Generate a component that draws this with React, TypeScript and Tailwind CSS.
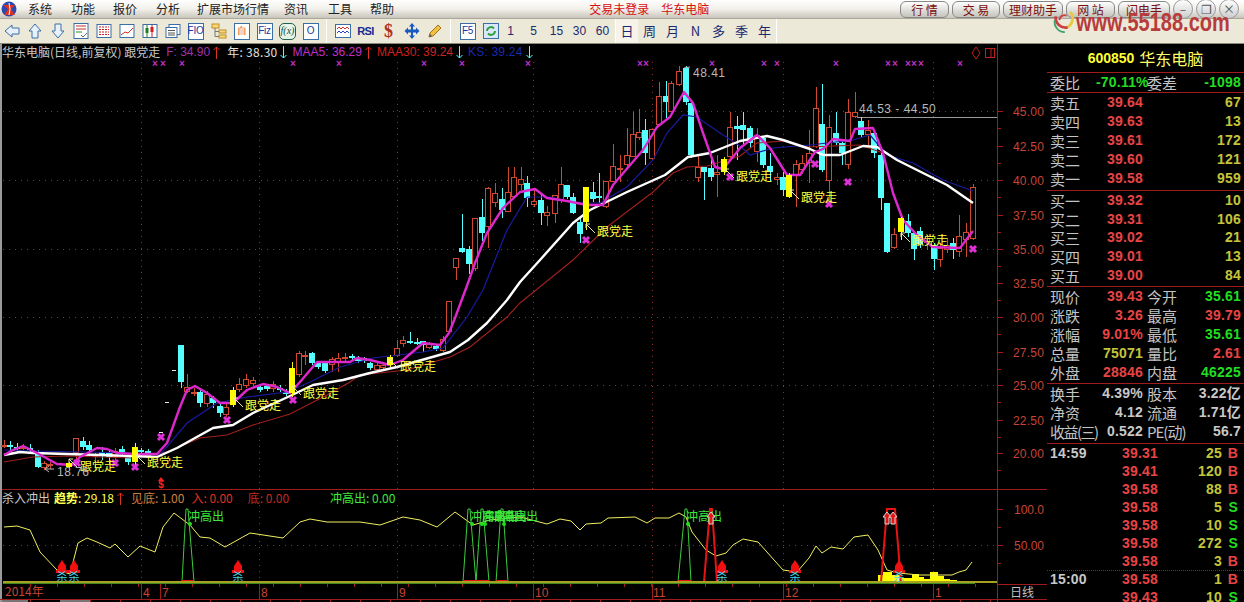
import type { ReactNode } from "react"

const font = "font-['Liberation_Sans','Noto_Sans_CJK_SC',sans-serif]"
const cjk = "font-['Noto_Sans_CJK_SC','Liberation_Sans',sans-serif]"

type Kind = "r" | "c" | "y"
// x, body top, body bottom, high, low (all screen px)
const candles: [number, number, number, number, number, Kind][] = [
  [4, 445, 446, 440, 448, "r"], [10, 445, 446, 441, 451, "c"], [17, 447, 448, 443, 452, "c"], [23, 447, 448, 444, 450, "r"],
  [30, 448, 449, 444, 452, "c"], [38, 453, 467, 450, 468, "c"], [44, 463, 468, 461, 470, "r"], [50, 464, 465, 462, 469, "r"],
  [69, 463, 467, 462, 468, "y"], [76, 438, 453, 438, 463, "r"], [83, 441, 447, 437, 450, "c"], [89, 445, 450, 441, 453, "c"],
  [95, 455, 456, 453, 470, "r"], [102, 452, 455, 447, 460, "c"], [109, 453, 457, 451, 464, "c"], [115, 451, 457, 448, 466, "r"],
  [122, 449, 454, 446, 456, "c"], [128, 457, 462, 455, 465, "c"], [135, 447, 462, 443, 465, "y"], [141, 450, 451, 448, 456, "c"],
  [148, 451, 456, 449, 458, "c"], [181, 345, 382, 345, 388, "c"], [187, 387, 392, 374, 393, "r"], [194, 392, 393, 388, 396, "r"],
  [200, 392, 403, 390, 407, "c"], [207, 394, 404, 391, 407, "r"], [213, 398, 403, 396, 408, "c"], [220, 406, 413, 403, 417, "c"],
  [226, 407, 415, 403, 417, "r"], [233, 390, 405, 387, 407, "y"], [239, 384, 390, 378, 392, "r"], [246, 379, 386, 374, 388, "r"],
  [253, 380, 384, 377, 387, "r"], [260, 387, 390, 384, 392, "c"], [267, 386, 389, 384, 391, "c"], [273, 384, 389, 381, 392, "r"],
  [280, 388, 390, 385, 392, "c"], [286, 392, 394, 389, 396, "c"], [292, 368, 393, 362, 397, "y"], [299, 353, 375, 351, 377, "r"],
  [305, 355, 356, 351, 365, "r"], [312, 353, 363, 352, 365, "c"], [318, 363, 367, 362, 369, "c"], [325, 363, 371, 361, 373, "c"],
  [332, 359, 365, 357, 372, "r"], [338, 358, 362, 353, 372, "r"], [345, 357, 358, 353, 362, "r"], [352, 356, 357, 354, 360, "c"],
  [358, 358, 361, 356, 363, "c"], [364, 358, 361, 357, 363, "c"], [370, 363, 368, 362, 370, "c"], [377, 365, 370, 363, 372, "r"],
  [383, 365, 368, 364, 370, "r"], [390, 357, 365, 355, 367, "y"], [397, 348, 356, 340, 357, "r"], [403, 340, 344, 336, 347, "r"],
  [410, 341, 342, 332, 344, "c"], [417, 342, 343, 338, 345, "c"], [423, 341, 345, 341, 352, "c"], [429, 344, 348, 342, 349, "r"],
  [436, 346, 349, 344, 351, "c"], [443, 339, 351, 336, 352, "r"], [449, 301, 332, 301, 333, "r"], [456, 258, 268, 258, 280, "r"],
  [462, 248, 252, 214, 253, "c"], [469, 249, 264, 246, 274, "c"], [475, 218, 269, 218, 271, "r"], [482, 217, 233, 199, 241, "c"],
  [488, 188, 227, 187, 248, "r"], [495, 193, 203, 183, 207, "r"], [502, 199, 210, 188, 218, "c"], [508, 192, 212, 167, 212, "r"],
  [514, 177, 197, 167, 197, "r"], [521, 179, 185, 167, 190, "r"], [527, 183, 198, 176, 207, "c"], [534, 201, 205, 190, 207, "r"],
  [541, 200, 213, 195, 225, "c"], [547, 212, 216, 206, 226, "r"], [555, 195, 214, 195, 223, "r"], [561, 184, 200, 167, 203, "r"],
  [567, 185, 197, 185, 199, "c"], [573, 197, 213, 193, 214, "c"], [580, 222, 234, 217, 243, "c"], [586, 187, 222, 187, 230, "y"],
  [593, 192, 199, 182, 202, "c"], [599, 196, 197, 173, 203, "c"], [606, 181, 207, 181, 208, "r"], [613, 166, 182, 144, 182, "r"],
  [620, 168, 170, 155, 182, "r"], [627, 155, 165, 128, 169, "r"], [633, 134, 157, 112, 157, "r"], [639, 132, 138, 109, 140, "r"],
  [645, 130, 153, 119, 165, "c"], [652, 129, 159, 129, 160, "r"], [659, 96, 125, 82, 125, "r"], [666, 96, 102, 81, 118, "c"],
  [671, 83, 112, 81, 112, "r"], [679, 71, 85, 66, 86, "r"], [686, 68, 102, 66, 105, "c"], [691, 103, 155, 103, 158, "c"],
  [698, 167, 178, 155, 182, "r"], [704, 167, 172, 167, 200, "c"], [711, 168, 177, 160, 181, "c"], [717, 172, 175, 155, 197, "r"],
  [724, 159, 172, 157, 175, "y"], [730, 127, 157, 112, 158, "r"], [737, 126, 129, 116, 160, "c"], [743, 125, 130, 112, 145, "c"],
  [750, 128, 143, 126, 148, "c"], [757, 135, 152, 128, 162, "r"], [763, 138, 165, 136, 168, "c"], [770, 166, 172, 153, 182, "c"],
  [777, 177, 180, 173, 185, "r"], [783, 177, 190, 172, 196, "c"], [789, 175, 197, 173, 198, "y"], [796, 164, 175, 160, 207, "r"],
  [802, 163, 170, 155, 174, "r"], [809, 153, 163, 130, 183, "r"], [816, 108, 147, 87, 148, "r"], [822, 124, 170, 84, 172, "c"],
  [829, 127, 181, 115, 200, "r"], [836, 133, 143, 112, 145, "c"], [842, 143, 153, 141, 165, "c"], [848, 112, 165, 99, 169, "r"],
  [855, 112, 117, 92, 118, "r"], [861, 121, 135, 117, 137, "c"], [868, 130, 135, 120, 145, "r"], [874, 133, 153, 131, 158, "c"],
  [881, 155, 198, 153, 210, "c"], [887, 203, 252, 203, 253, "c"], [894, 234, 248, 228, 249, "r"], [901, 218, 232, 217, 240, "y"],
  [908, 221, 233, 214, 237, "c"], [914, 233, 249, 231, 260, "c"], [920, 231, 244, 227, 248, "c"], [927, 238, 243, 235, 250, "r"],
  [934, 245, 259, 243, 270, "c"], [940, 248, 260, 243, 267, "r"], [947, 245, 250, 238, 253, "r"], [953, 243, 250, 238, 259, "c"],
  [959, 236, 252, 215, 257, "r"], [966, 232, 240, 223, 257, "r"], [973, 187, 239, 184, 240, "r"],
]

const pink = "4,455 13,450 23,446 37,453 57,464 72,465 80,457 97,448 107,449 117,453 133,454 157,454 167,443 180,407 187,390 195,386 207,393 220,403 233,403 247,390 263,384 277,387 290,393 300,382 317,362 350,362 357,358 370,360 390,365 403,360 423,343 440,345 449,333 455,318 468,283 475,263 487,233 503,208 520,192 535,189 547,198 567,201 587,205 603,205 613,185 643,150 657,127 670,117 684,92 693,103 703,133 715,167 723,169 737,152 740,148 757,135 770,148 787,175 800,175 815,152 823,149 833,139 850,141 855,129 873,128 883,153 893,193 903,220 917,235 933,247 960,248 973,231"
const white = "4,455 20,452 33,453 67,454 133,456 157,457 177,448 213,428 233,425 253,413 290,396 313,385 343,380 370,373 397,367 450,352 468,340 487,323 507,300 520,282 540,260 573,223 590,210 627,192 665,175 688,157 710,153 740,141 767,136 783,140 810,149 823,155 840,155 863,146 877,147 897,160 923,173 947,185 973,203"
const red = "4,462 33,457 67,456 133,458 167,452 200,438 227,435 253,425 290,414 327,395 350,382 360,375 407,370 450,357 470,347 507,317 520,303 573,260 607,227 653,192 673,173 687,167 707,166 740,156 757,143 783,141 807,147 860,145 883,153"
const blue = "4,450 33,451 133,453 160,455 187,423 217,403 247,397 287,392 310,382 340,367 373,358 423,352 443,348 467,317 483,290 503,240 507,230 527,197 550,197 577,203 600,203 627,187 653,160 667,133 683,115 697,117 720,133 740,146 750,155 773,148 810,145 853,140 870,135 887,155 913,163 943,180 973,191"
const trend = "4,527 17,526 30,530 40,552 57,570 70,574 78,543 87,538 97,542 110,548 115,544 128,557 140,546 155,552 163,527 174,513 190,525 200,537 210,538 225,547 250,533 283,538 300,522 310,519 327,522 360,522 380,525 403,517 420,520 437,527 455,512 473,525 490,520 520,517 547,524 560,519 571,521 580,530 586,524 601,523 608,518 635,517 647,523 655,518 669,518 679,513 686,517 692,532 706,550 716,556 726,553 733,545 743,539 758,542 783,570 797,572 809,558 816,546 822,553 831,547 843,549 854,537 868,535 878,550 887,570 898,573 919,575 952,575 959,572 966,570 972,562"

const months = [141, 259, 397, 533, 652, 783, 933]
const topMarks = [155, 163, 182, 293, 339, 424, 462, 528, 640, 646, 712, 764, 777, 836, 888, 895, 908, 914, 921, 960]
const sellMarks: [number, number][] = [[77, 463], [115, 463], [135, 467], [161, 437], [227, 420], [293, 400], [586, 240], [730, 177], [815, 164], [848, 182], [829, 204], [973, 249]]
const priceLabels: [string, number][] = [["45.00", 111], ["42.50", 146], ["40.00", 180], ["37.50", 215], ["35.00", 249], ["32.50", 283], ["30.00", 317], ["27.50", 352], ["25.00", 385], ["22.50", 420], ["20.00", 453]]
const follow: [number, number][] = [[80, 466], [147, 462], [245, 405], [303, 393], [400, 366], [597, 231], [736, 176], [801, 197], [912, 240]]

function Candle({ c }: { c: (typeof candles)[number] }) {
  const [x, top, bot, hi, lo, kind] = c
  const color = kind === "r" ? "#d0492f" : kind === "c" ? "#55ffff" : "#ffff00"
  const h = Math.max(bot - top - 1, 1)
  return (
    <g>
      <line x1={x} x2={x} y1={hi} y2={lo} stroke={color} shapeRendering="crispEdges" />
      <rect x={x - 2.5} y={top + 0.5} width={5} height={h} fill={kind === "r" ? "#000" : color} stroke={color} shapeRendering="crispEdges" />
    </g>
  )
}

function MainChart() {
  return (
    <svg viewBox="0 44 1047 445" className="block w-[1047px] h-[445px]">
      <line x1="1" x2="1" y1="44" y2="489" stroke="#9a9a9a" strokeWidth="2" />
      {[111, 180, 249, 317, 385].map((y) => (
        <line key={y} x1="3" x2="997" y1={y + 0.5} y2={y + 0.5} stroke="#a02a20" strokeDasharray="1 5" />
      ))}
      {months.map((x) => (
        <line key={x} x1={x + 0.5} x2={x + 0.5} y1="62" y2="489" stroke="#a02a20" strokeDasharray="1 5" />
      ))}
      <line x1="857" x2="997" y1="117.5" y2="117.5" stroke="#9a9a9a" />
      {candles.map((c) => (
        <Candle key={c[0]} c={c} />
      ))}
      {[[161, 432], [167, 402], [174, 370]].map(([x, y]) => (
        <line key={x} x1={x - 2} x2={x + 2} y1={y + 0.5} y2={y + 0.5} stroke="#e8e8e8" />
      ))}
      <polyline points={red} fill="none" stroke="#a0201c" strokeWidth="1.1" />
      <polyline points={blue} fill="none" stroke="#1a1aa0" strokeWidth="1.2" />
      <polyline points={white} fill="none" stroke="#ffffff" strokeWidth="2.4" strokeLinejoin="round" />
      <polyline points={pink} fill="none" stroke="#dc28cc" strokeWidth="2.4" strokeLinejoin="round" />
      {candles.filter((c) => c[5] === "y").map((c) => (
        <Candle key={c[0]} c={c} />
      ))}
      {topMarks.map((x) => (
        <text key={x} x={x} y="67" fill="#c030c0" fontSize="10" textAnchor="middle" fontFamily="Liberation Sans" fontWeight="700">×</text>
      ))}
      {sellMarks.map(([x, y]) => (
        <path key={x} d={`M${x - 3} ${y - 3}L${x + 3} ${y + 3}M${x + 3} ${y - 3}L${x - 3} ${y + 3}`} stroke="#e030d8" strokeWidth="3" />
      ))}
      {follow.map(([x, y]) => (
        <g key={x}>
          <path d={`M${x - 2} ${y + 2}L${x - 11} ${y - 7}M${x - 11} ${y - 7}h4M${x - 11} ${y - 7}v4`} stroke="#e8e8b0" fill="none" />
          <text x={x} y={y + 5} fill="#ffff40" fontSize="12" fontFamily="Noto Sans CJK SC">跟党走</text>
        </g>
      ))}
      <g fill="#b8b8b8" fontFamily="Liberation Sans" fontSize="12">
        <path d="M45 469l9 0M45 469l4-3M45 469l4 3" stroke="#b8b8b8" fill="none" />
        <text x="57" y="476" letterSpacing="0.5">18.76</text>
        <text x="859" y="113" letterSpacing="0.5">44.53 - 44.50</text>
        <path d="M684 68l6-1" stroke="#b8b8b8" />
        <text x="693" y="77" letterSpacing="0.5">48.41</text>
      </g>
      <path d="M161 477l3 4h-6z" fill="#ff2020" />
      <text x="161" y="488" fill="#ff2020" fontSize="10" fontWeight="700" fontFamily="Liberation Sans" textAnchor="middle">$</text>
      <line x1="997.5" x2="997.5" y1="44" y2="489" stroke="#a01c1c" />
      <path d="M976 47l4 6-4 6-4-6z" fill="none" stroke="#c02020" />
      <rect x="985.5" y="48.5" width="9" height="9" fill="none" stroke="#c02020" />
      <line x1="991" x2="991" y1="48" y2="58" stroke="#c02020" />
      {priceLabels.map(([t, y]) => (
        <g key={t}>
          <line x1="998" x2="1003" y1={y + 0.5} y2={y + 0.5} stroke="#a01c1c" />
          <line x1="998" x2="1001" y1={y + 17.5} y2={y + 17.5} stroke="#a01c1c" />
          <text x="1013" y={y + 5} fill="#c84434" fontSize="12" fontFamily="Liberation Sans" letterSpacing="0.2">{t}</text>
        </g>
      ))}
      <line x1="1047.5" x2="1047.5" y1="44" y2="489" stroke="#a01c1c" />
    </svg>
  )
}

function Peak({ a, b, c, color, w }: { a: number; b: number; c: number; color: string; w: number }) {
  return <polyline points={`${a},582 ${b - 1},509 ${b + 1},509 ${c},582`} fill="none" stroke={color} strokeWidth={w} />
}

function SellTag({ x }: { x: number }) {
  return (
    <g>
      <path d={`M${x} 560l4 6v4h2v3h-12v-3h2v-4z`} fill="#f01010" />
      <text x={x} y="581" fill="#40d8e8" fontSize="11" textAnchor="middle" fontFamily="Noto Sans CJK SC">杀</text>
    </g>
  )
}

function Lower() {
  const bars: [number, number, number][] = [[878, 883, 575], [883, 892, 572], [892, 901, 575], [901, 912, 578], [912, 919, 574], [919, 924, 577], [924, 930, 579], [930, 938, 572], [938, 944, 576], [944, 950, 579], [950, 957, 580], [974, 977, 581]]
  return (
    <svg viewBox="0 489 1047 113" className="block w-[1047px] h-[113px]">
      <line x1="0" x2="1047" y1="489.5" y2="489.5" stroke="#a01c1c" />
      <line x1="1" x2="1" y1="489" y2="602" stroke="#9a9a9a" strokeWidth="2" />
      <line x1="3" x2="997" y1="545.5" y2="545.5" stroke="#a02a20" strokeDasharray="1 5" />
      {months.map((x) => (
        <line key={x} x1={x + 0.5} x2={x + 0.5} y1="505" y2="582" stroke="#a02a20" strokeDasharray="1 5" />
      ))}
      {bars.map(([a, b, y]) => (
        <rect key={a} x={a} y={y} width={b - a} height={582 - y} fill="#ffff00" />
      ))}
      <polyline points={trend} fill="none" stroke="#f0f060" strokeWidth="1" />
      {[[182, 187, 194], [463, 469, 476], [476, 482, 489], [496, 502, 508], [678, 686, 691]].map(([a, b, c]) => (
        <Peak key={a} a={a} b={b} c={c} color="#3ccc3c" w={1} />
      ))}
      <Peak a={704} b={711} c={717} color="#e81414" w={2} />
      <polyline points="881,582 887,509 895,509 901,582" fill="none" stroke="#e81414" strokeWidth="2" />
      {[[182, 194], [463, 476], [476, 489], [496, 508], [678, 691]].map(([a, b]) => (
        <rect key={a} x={a} y="580" width={b - a} height="2" fill="#e81414" />
      ))}
      <line x1="3" x2="997" y1="582" y2="582" stroke="#a8a020" strokeWidth="2" />
      <line x1="3" x2="975" y1="583.5" y2="583.5" stroke="#3a8a20" />
      {[190, 472, 482, 485, 504, 688].map((x) => (
        <circle key={x} cx={x} cy="524" r="2" fill="#20e020" />
      ))}
      {[188, 470, 482, 491, 502, 686].map((x) => (
        <text key={x} x={x} y="521" fill="#3ce83c" fontSize="12" fontFamily="Noto Sans CJK SC">冲高出</text>
      ))}
      {[711, 887, 893].map((x) => (
        <path key={x} d={`M${x} 512l4 5h-2v7h-4v-7h-2z`} fill="#e81414" stroke="#d8d8d8" />
      ))}
      {[62, 74, 238, 722, 795, 899].map((x) => (
        <SellTag key={x} x={x} />
      ))}
      <line x1="997.5" x2="997.5" y1="489" y2="602" stroke="#a01c1c" />
      <line x1="1047.5" x2="1047.5" y1="489" y2="602" stroke="#a01c1c" />
      <line x1="997" x2="1047" y1="584.5" y2="584.5" stroke="#a01c1c" />
      <line x1="998" x2="1003" y1="509.5" y2="509.5" stroke="#a01c1c" />
      <line x1="998" x2="1003" y1="545.5" y2="545.5" stroke="#a01c1c" />
      <line x1="998" x2="1001" y1="527.5" y2="527.5" stroke="#a01c1c" />
      <line x1="998" x2="1001" y1="563.5" y2="563.5" stroke="#a01c1c" />
      <text x="1014" y="514" fill="#c84434" fontSize="12" fontFamily="Liberation Sans">100.0</text>
      <text x="1014" y="550" fill="#c84434" fontSize="12" fontFamily="Liberation Sans">50.00</text>
      {/* date axis */}
      {[141, 160, 259, 397, 533, 652, 783, 933].map((x) => (
        <line key={x} x1={x + 0.5} x2={x + 0.5} y1="584" y2="599" stroke="#a01c1c" />
      ))}
      {Array.from({ length: 36 }, (_, i) => 30 + i * 27).map((x) => (
        <line key={x} x1={x + 0.5} x2={x + 0.5} y1="584" y2="587" stroke="#a01c1c" />
      ))}
      {Array.from({ length: 33 }, (_, i) => 30 + i * 30).map((x) => (
        <line key={x} x1={x + 0.5} x2={x + 0.5} y1="599" y2="602" stroke="#a01c1c" />
      ))}
      <line x1="0" x2="1047" y1="599.5" y2="599.5" stroke="#a01c1c" />
      <g fill="#c84434" fontSize="12" fontFamily="Noto Sans CJK SC">
        <text x="5" y="596">2014年</text>
        {[["4", 143], ["7", 162], ["8", 261], ["9", 399], ["10", 535], ["11", 653], ["12", 785], ["1", 935]].map(([t, x]) => (
          <text key={String(t)} x={x}  y="597" fontFamily="Liberation Sans">{t}</text>
        ))}
      </g>
      <text x="1010" y="597" fill="#c0c0c0" fontSize="12" fontFamily="Noto Sans CJK SC">日线</text>
      <rect x="2" y="600" width="26" height="2" fill="#777" />
      <rect x="60" y="600" width="30" height="2" fill="#777" />
    </svg>
  )
}

function Arrow({ up, color }: { up?: boolean; color: string }) {
  return (
    <svg width="7" height="13" viewBox="0 0 7 13" className="shrink-0">
      <path d={up ? "M3.5 13V1M.5 4l3-3 3 3" : "M3.5 0v12M.5 9l3 3 3-3"} stroke={color} fill="none" />
    </svg>
  )
}

function Legend({ children, className }: { children: ReactNode; className: string }) {
  return <div className={`absolute left-[2px] right-[60px] h-4 flex items-center text-[12px] whitespace-nowrap ${font} ${className}`}>{children}</div>
}

function Row({ label, value, valueColor, label2, value2, value2Color, h = "h-[19px]" }: { label: string; value: string; valueColor: string; label2?: string; value2: string; value2Color: string; h?: string }) {
  return (
    <div className={`${h} flex items-center relative`}>
      <span className={`w-[49px] pl-[3px] text-[#c4c4c4] text-[15px] leading-none whitespace-nowrap ${label.length > 2 ? "tracking-[-1.5px]" : ""} ${cjk}`}>{label}</span>
      <span className={`w-[47px] text-right text-[14px] font-bold tracking-[0.2px] ${valueColor}`}>{value}</span>
      <span className={`w-[50px] pl-[4px] text-[#c4c4c4] text-[15px] leading-none whitespace-nowrap ${label2 && label2.length > 2 ? "tracking-[-1px]" : ""} ${cjk}`}>{label2}</span>
      <span className={`flex-1 text-right pr-[3px] text-[14px] font-bold tracking-[0.2px] ${value2Color}`}>{value2}</span>
    </div>
  )
}

const R = "text-[#e84444]"
const G = "text-[#22dd22]"
const Y = "text-[#c4c43a]"
const W = "text-[#c8c8c8]"

function Trade({ time, price, vol, side, dashed }: { time?: string; price: string; vol: string; side: string; dashed?: boolean }) {
  return (
    <div className={`h-[18px] flex items-center text-[14px] font-bold tracking-[0.2px] ${dashed ? "border-t border-dotted border-[#a01c1c]" : ""}`}>
      <span className={`w-[64px] pl-[3px] ${W}`}>{time}</span>
      <span className={`w-[47px] text-right ${R}`}>{price}</span>
      <span className={`w-[64px] text-right ${Y}`}>{vol}</span>
      <span className={`w-[16px] text-right ${side === "B" ? R : G}`}>{side}</span>
    </div>
  )
}

function Quote() {
  const sell: [string, string, string][] = [["卖五", "39.64", "67"], ["卖四", "39.63", "13"], ["卖三", "39.61", "172"], ["卖二", "39.60", "121"], ["卖一", "39.58", "959"]]
  const buy: [string, string, string][] = [["买一", "39.32", "10"], ["买二", "39.31", "106"], ["买三", "39.02", "21"], ["买四", "39.01", "13"], ["买五", "39.00", "84"]]
  return (
    <div className={`w-[197px] h-full overflow-hidden bg-black ${font}`}>
      <div className="h-[29px] flex items-center justify-center gap-[5px] border-b border-[#a01c1c]">
        <span className="text-[#ffff33] text-[14px] font-bold">600850</span>
        <span className={`text-[#ffff66] text-[16px] ${cjk}`}>华东电脑</span>
      </div>
      <div className="h-[20px] border-b border-[#a01c1c]">
        <Row label="委比" value="-70.11%" valueColor={G} label2="委差" value2="-1098" value2Color={G} h="h-[18px]" />
      </div>
      <div className="h-[98px] border-b border-[#a01c1c]">
        {sell.map(([a, b, c]) => (
          <Row key={a} label={a} value={b} valueColor={R} value2={c} value2Color={Y} />
        ))}
      </div>
      <div className="h-[96px] border-b border-[#a01c1c]">
        {buy.map(([a, b, c]) => (
          <Row key={a} label={a} value={b} valueColor={R} value2={c} value2Color={Y} h="h-[18.7px]" />
        ))}
      </div>
      <div className="h-[97px] border-b border-[#a01c1c]">
        <Row label="现价" value="39.43" valueColor={R} label2="今开" value2="35.61" value2Color={G} />
        <Row label="涨跌" value="3.26" valueColor={R} label2="最高" value2="39.79" value2Color={R} />
        <Row label="涨幅" value="9.01%" valueColor={R} label2="最低" value2="35.61" value2Color={G} />
        <Row label="总量" value="75071" valueColor={Y} label2="量比" value2="2.61" value2Color={R} />
        <Row label="外盘" value="28846" valueColor={R} label2="内盘" value2="46225" value2Color={G} />
      </div>
      <div className="h-[60px] border-b border-[#a01c1c]">
        <Row label="换手" value="4.39%" valueColor={W} label2="股本" value2="3.22亿" value2Color={W} />
        <Row label="净资" value="4.12" valueColor={W} label2="流通" value2="1.71亿" value2Color={W} />
        <Row label="收益(三)" value="0.522" valueColor={W} label2="PE(动)" value2="56.7" value2Color={W} />
      </div>
      <Trade time="14:59" price="39.31" vol="25" side="B" />
      <Trade price="39.41" vol="120" side="B" />
      <Trade price="39.58" vol="88" side="B" />
      <Trade price="39.58" vol="5" side="S" />
      <Trade price="39.58" vol="10" side="S" />
      <Trade price="39.58" vol="272" side="S" />
      <Trade price="39.58" vol="3" side="B" />
      <Trade time="15:00" price="39.58" vol="1" side="B" dashed />
      <Trade price="39.43" vol="10" side="S" />
    </div>
  )
}

function Ico({ children }: { children: ReactNode }) {
  return <span className="w-[23px] h-[20px] shrink-0 flex items-center justify-center">{children}</span>
}

function Box({ text, color = "#1a3aa0" }: { text: string; color?: string }) {
  return (
    <span className="w-[16px] h-[17px] flex items-center justify-center bg-white border border-[#3a6ea5] text-[10px] leading-none font-['Liberation_Sans'] tracking-tight" style={{ color }}>
      {text}
    </span>
  )
}

function Svg({ children }: { children: ReactNode }) {
  return <svg width="18" height="18" viewBox="0 0 18 18" fill="none">{children}</svg>
}

function Sep({ className = "mx-[4px]" }: { className?: string }) {
  return <span className={`w-px h-[24px] bg-[#a8a698] border-r border-white shrink-0 ${className}`} />
}

function Toolbar() {
  const nums = ["1", "5", "15", "30", "60"]
  const periods = ["周", "月", "N", "多", "季", "年"]
  return (
    <div className={`h-[26px] bg-[#ece9d8] border-t border-[#aca899] border-b border-b-[#8a8878] flex items-center shrink-0 ${cjk}`}>
      <Ico><Svg><path d="M2 9l7-6v3h7v6H9v3z" fill="#e8f0fa" stroke="#3a6ea5" /></Svg></Ico>
      <Ico><Svg><path d="M9 2l6 7h-3v7H6V9H3z" fill="#e8f0fa" stroke="#3a6ea5" /></Svg></Ico>
      <Ico><Svg><path d="M9 16l6-7h-3V2H6v7H3z" fill="#e8f0fa" stroke="#3a6ea5" /></Svg></Ico>
      <Ico><Svg><rect x="2" y="1.5" width="14" height="15" fill="#fff" stroke="#3a6ea5" /><path d="M4 4h10M4 7h10" stroke="#c03030" /><path d="M4 10h6" stroke="#209020" /><path d="M9 13l2 2 4-4" stroke="#666" /></Svg></Ico>
      <Ico><Svg><rect x="2" y="2.5" width="14" height="13" fill="#fff" stroke="#3a6ea5" /><path d="M4 5h10M4 7.5h10M4 10h10M4 12.5h10" stroke="#c02020" strokeDasharray="2 1" /></Svg></Ico>
      <Ico><Svg><rect x="2" y="2.5" width="14" height="13" fill="#fff" stroke="#3a6ea5" /><path d="M3 13l4-3 3 1 5-5" stroke="#d83020" /></Svg></Ico>
      <Ico><Svg><rect x="2" y="2.5" width="14" height="13" fill="#fff" stroke="#3a6ea5" /><path d="M6 3v12" stroke="#208020" /><path d="M11 3v12" stroke="#d02020" /><rect x="4.5" y="6" width="3" height="5" fill="#208020" /><rect x="9.5" y="5" width="3" height="5" fill="#d02020" /></Svg></Ico>
      <Ico><Svg><rect x="5" y="2.5" width="11" height="10" fill="#fff" stroke="#3a6ea5" /><rect x="2" y="5.5" width="11" height="10" fill="#fff" stroke="#3a6ea5" /><path d="M4 8.5h7M4 11h7M4 13h7" stroke="#555" /></Svg></Ico>
      <Ico><Box text="FIO" /></Ico>
      <Ico><Svg><rect x="2" y="2" width="7" height="4" fill="#f8d878" stroke="#c09020" /><rect x="9" y="8" width="7" height="3" fill="#f8d878" stroke="#c09020" /><rect x="9" y="13" width="7" height="3" fill="#f8d878" stroke="#c09020" /><path d="M5 6v8.5h4M5 9.5h4" stroke="#777" /></Svg></Ico>
      <Ico><Box text="自" color="#e06010" /></Ico>
      <Ico><Box text="Fiz" /></Ico>
      <Ico><span className="w-[17px] h-[17px] flex items-center justify-center rounded-[5px] bg-[#e8f4e8] border border-[#206050] text-[#105040] text-[10px] italic font-['Liberation_Serif'] leading-none">f(x)</span></Ico>
      <Ico><Box text="O" /></Ico>
      <Sep />
      <Ico><Svg><rect x="1.5" y="2.5" width="15" height="13" fill="#fff" stroke="#3a6ea5" /><path d="M3 7l2-2 2 2 2-2 2 2 2-2 2 2" stroke="#d03030" /><path d="M3 11l2-2 2 2 2-2 2 2 2-2 2 2" stroke="#3040c0" /></Svg></Ico>
      <Ico><span className="text-[#1a2a90] text-[11px] font-bold font-['Liberation_Sans'] tracking-tighter">RSI</span></Ico>
      <Ico><span className="text-[#b03020] text-[18px] font-bold font-['Liberation_Serif'] leading-none">$</span></Ico>
      <Ico><Svg><path d="M9 1l3 3.500h-2v3h3V5.500L16.500 9 13 12.500V10.500h-3v3h2L9 17l-3-3.500h2v-3H5v2L1.500 9 5 5.500v2h3v-3H6z" fill="#1a5ac0" /></Svg></Ico>
      <Ico><Svg><path d="M3 15l1-4 8-8 3 3-8 8z" fill="#f0c040" stroke="#a07020" /><path d="M3 15l1-3 2 2z" fill="#555" /></Svg></Ico>
      <Sep />
      <span className="ml-px"><Ico><Box text="F5" /></Ico></span>
      <Ico><Svg><rect x="1.5" y="1.500" width="15" height="15" fill="#d8e8f8" stroke="#3a6ea5" /><path d="M5 9a4 4 0 0 1 7-2.500M13 9a4 4 0 0 1-7 2.500" stroke="#30a040" strokeWidth="2" /></Svg></Ico>
      <div className={`flex -ml-[3px] text-[12px] text-[#1a2a70] ${font}`}>
        {nums.map((n) => (
          <span key={n} className="w-[23px] text-center">{n}</span>
        ))}
      </div>
      <Sep className="ml-px" />
      <span className="w-[22px] h-[24px] bg-[#f6f4ea] flex items-center justify-center text-[13px] text-[#1a2a70]">日</span>
      {periods.map((p) => (
        <span key={p} className="w-[23px] text-center text-[13px] text-[#1a2a70]">{p}</span>
      ))}
      <Sep className="ml-0" />
    </div>
  )
}

function Menu() {
  const items: [string, string][] = [["系统", "ml-[10px]"], ["功能", "ml-[19px]"], ["报价", "ml-[18px]"], ["分析", "ml-[19px]"], ["扩展市场行情", "ml-[17px]"], ["资讯", "ml-[15px]"], ["工具", "ml-[20px]"], ["帮助", "ml-[18px]"]]
  const btns: [string, string][] = [["行 情", "w-[49px]"], ["交 易", "w-[48px]"], ["理财助手", "w-[60px]"], ["网 站", "w-[49px]"], ["闪电手", "w-[52px]"]]
  return (
    <div className={`h-[18px] flex items-center shrink-0 bg-gradient-to-b from-[#ffffff] via-[#f2f0ea] to-[#c8c6bc] text-[12px] leading-none text-[#222] relative ${cjk}`}>
      <svg width="18" height="18" viewBox="0 0 18 18" className="shrink-0">
        <circle cx="9" cy="9" r="7.500" fill="#2a4ab0" />
        <path d="M3 5h12l-4 4 4 6H4l4-6z" fill="#e03020" />
        <path d="M9 3l1 6-1 6" stroke="#fff" fill="none" />
      </svg>
      {items.map(([t, m]) => (
        <span key={t} className={`${m} whitespace-nowrap`}>{t}</span>
      ))}
      <span className="ml-[195px] text-[#d81010]">交易未登录</span>
      <span className="ml-[12px] text-[#d81010]">华东电脑</span>
      <div className="ml-auto mr-[5px] flex items-center gap-[3px]">
        {btns.map(([t, w]) => (
          <span key={t} className={`${w} h-[17px] text-center leading-[16px] text-[#7a1010] rounded-[6px] border border-[#888] bg-gradient-to-b from-[#ffffff] to-[#c4c4bc] whitespace-nowrap`}>{t}</span>
        ))}
        {["–", "❐", "×"].map((t) => (
          <span key={t} className="w-[20px] h-[20px] rounded-full border border-[#999] bg-gradient-to-b from-[#fff] to-[#ccc] text-[#555] text-[12px] flex items-center justify-center leading-none">{t}</span>
        ))}
      </div>
    </div>
  )
}

export default function App() {
  return (
    <div className={`w-[1244px] h-[602px] overflow-hidden flex flex-col bg-black relative ${font}`}>
      <Menu />
      <Toolbar />
      <div className="flex-1 flex min-h-0">
        <div className="w-[1047px] shrink-0 relative">
          <MainChart />
          <Lower />
          <Legend className="top-0">
            <span className={`text-[#c8c8c8] ${cjk}`}>华东电脑(日线,前复权) 跟党走</span>
            <span className="ml-[6px] text-[#a032a8]">F: 34.90</span>
            <span className="ml-[3px]"><Arrow up color="#e03020" /></span>
            <span className={`ml-[7px] text-[#e0e0e0] tracking-[0.3px] ${cjk}`}>年: 38.30</span>
            <span className="ml-[2px]"><Arrow color="#55ffff" /></span>
            <span className="ml-[6px] text-[#c030c8]">MAA5: 36.29</span>
            <span className="ml-[3px]"><Arrow up color="#e03020" /></span>
            <span className="ml-[5px] text-[#d02020]">MAA30: 39.24</span>
            <span className="ml-[3px]"><Arrow color="#55ffff" /></span>
            <span className="ml-[5px] text-[#1a2ab0] tracking-[0.2px]">KS: 39.24</span>
            <span className="ml-[3px]"><Arrow color="#55ffff" /></span>
          </Legend>
          <Legend className="top-[446px]">
            <span className={`text-[#c8c8c8] ${cjk}`}>杀入冲出</span>
            <span className={`ml-[4px] text-[#ffff50] ${cjk}`}><b>趋势</b>: 29.18</span>
            <span className="ml-[3px]"><Arrow up color="#e03020" /></span>
            <span className={`ml-[7px] text-[#d08040] ${cjk}`}>见底: 1.00</span>
            <span className={`ml-[7px] text-[#e03020] ${cjk}`}>入: 0.00</span>
            <span className={`ml-[15px] text-[#c02a20] ${cjk}`}>底: 0.00</span>
            <span className={`ml-[41px] text-[#3ce83c] ${cjk}`}>冲高出: 0.00</span>
          </Legend>
        </div>
        <Quote />
      </div>
      <div className="absolute left-[1052px] top-[8px] flex items-center gap-[2px] pointer-events-none">
        <svg width="22" height="27" viewBox="0 0 24 27" fill="none">
          <path d="M20 3a11 11 0 0 1-4 17" stroke="#e8c840" strokeWidth="3" />
          <path d="M17 20A11 11 0 0 1 4 8" stroke="#c84040" strokeWidth="3" />
          <path d="M3 12a11 11 0 0 0 11 13" stroke="#40a070" strokeWidth="2" />
          <path d="M8 12a6 6 0 0 1 8-5" stroke="#c84040" strokeWidth="2" />
        </svg>
        <span className="text-[#b83c3c] text-[20px] font-bold leading-none whitespace-nowrap scale-y-125 font-['Liberation_Sans']">www.55188.com</span>
      </div>
    </div>
  )
}
